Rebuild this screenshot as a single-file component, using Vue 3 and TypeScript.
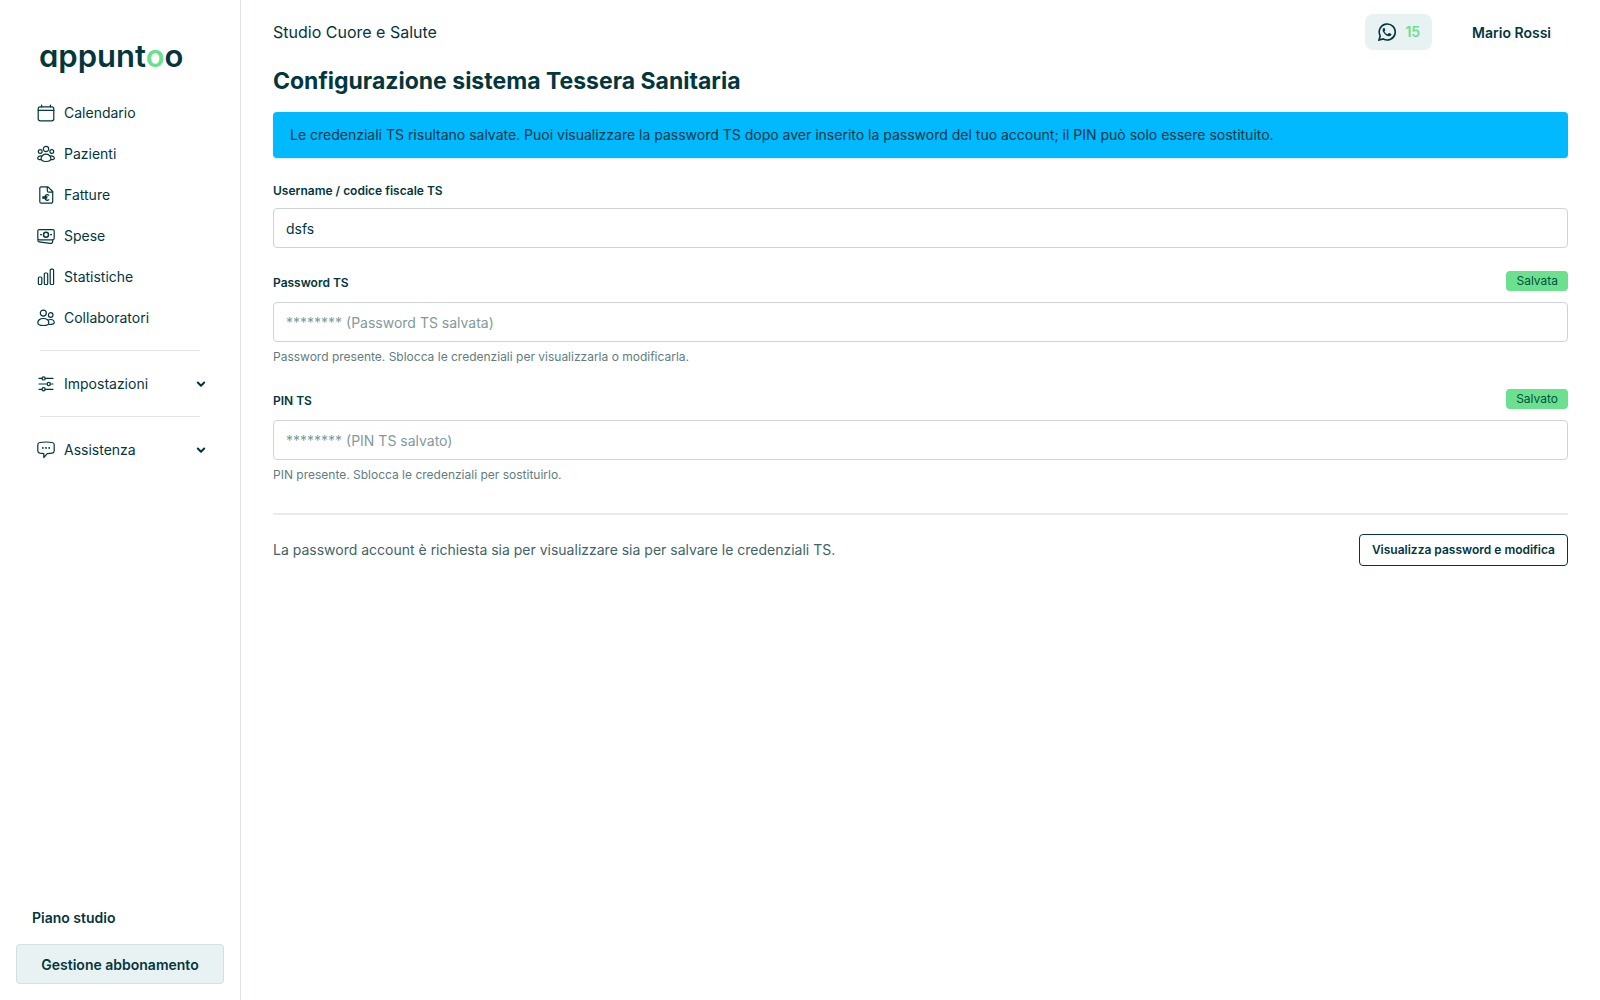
<script setup lang="ts">
import { ref } from 'vue'

interface NavItem {
  label: string
  icon: string
}

const icons: Record<string, string> = {
  calendar:
    '<rect x="1.2" y="2.8" width="15.6" height="14" rx="2"/><path d="M1.2 6.4h15.6M4.6 1v1.8M13.4 1v1.8"/>',
  patients:
    '<circle cx="9" cy="4" r="2.7"/><circle cx="3.2" cy="6.5" r="1.9"/><circle cx="14.8" cy="6.5" r="1.9"/><path d="M9 9.2c-2.7 0-4.9 2-4.9 4.4 0 1.800 1.900 2.900 4.900 2.900s4.900-1.100 4.900-2.900c0-2.400-2.200-4.400-4.900-4.400zM4.200 10.800C2 10.700.700 11.700.700 13.200c0 .9.900 1.500 3.200 1.500M13.800 10.800c2.200-.1 3.500.9 3.500 2.400 0 .9-.9 1.500-3.200 1.500"/>',
  invoice:
    '<path d="M4.300.8h6.700l4.700 4.700v10.200a1.500 1.500 0 0 1-1.500 1.500H4.300a1.500 1.500 0 0 1-1.500-1.500V2.300A1.500 1.500 0 0 1 4.300.8zM10.300 1v3.700a1.500 1.500 0 0 0 1.500 1.500h3.700"/><path d="M11.800 9.200a2.700 2.700 0 1 0 0 4.600M5.700 10.800h4.500M5.700 12.200h4"/>',
  expenses:
    '<rect x=".8" y="2.600" width="16.400" height="10.200" rx="1.500"/><circle cx="9" cy="7.700" r="2.500" stroke-width="1.500"/><path d="M3.500 7.700h.9M13.600 7.700h.9M.900 12.500v1.100c0 .7.500 1.100 1.200 1.200l10.900 1.500c1.500.2 2.700-.2 2.700-1.500v-1.800"/>',
  stats:
    '<rect x="1.400" y="9" width="3.400" height="7.500" rx="1"/><rect x="7.300" y="5" width="3.400" height="11.500" rx="1"/><rect x="13.200" y="1.200" width="3.400" height="15.300" rx="1"/>',
  team:
    '<circle cx="6.300" cy="4.100" r="3"/><circle cx="13.700" cy="6" r="2.300"/><path d="M6.300 9.500c-3.400 0-5.500 1.900-5.500 4.500 0 1.600 2 2.500 5.500 2.500s5.500-.9 5.500-2.500c0-2.600-2.100-4.500-5.500-4.500zM11 11.200c.7-.5 1.600-.7 2.700-.7 2.100 0 3.500 1.300 3.500 3 0 1.200-1.600 2-4.900 2"/>',
  sliders:
    '<path d="M2 3.400h3M8.200 3.400H16M2 9h8.200M13.400 9H16M2 14.300h3M8.200 14.300H16"/><circle cx="6.600" cy="3.400" r="1.600"/><circle cx="11.800" cy="9" r="1.600"/><circle cx="6.600" cy="14.300" r="1.600"/>',
  chat:
    '<path d="M2.800 1.500C6.500.9 11.500.9 15.200 1.500c1.200.2 2 1.100 2 2.300v6c0 1.300-.8 2.200-2 2.400-2 .3-3.600.4-5 .4L6.800 16.500v-3.900l-4-.4c-1.200-.2-2-1.100-2-2.400V3.800c0-1.200.8-2.100 2-2.300z"/><path d="M5.700 6.900h.2M8.900 6.900h.2M12.100 6.900h.2" stroke-width="1.700"/>',
}

const mainNav: NavItem[] = [
  { label: 'Calendario', icon: 'calendar' },
  { label: 'Pazienti', icon: 'patients' },
  { label: 'Fatture', icon: 'invoice' },
  { label: 'Spese', icon: 'expenses' },
  { label: 'Statistiche', icon: 'stats' },
  { label: 'Collaboratori', icon: 'team' },
]

const groups: NavItem[] = [
  { label: 'Impostazioni', icon: 'sliders' },
  { label: 'Assistenza', icon: 'chat' },
]

const username = ref('dsfs')
const password = ref('')
const pin = ref('')
</script>

<template>
  <div class="layout">
    <aside class="sidebar">
      <a class="logo" href="#">appunt<span class="logo-accent">o</span>o</a>
      <nav class="nav">
        <a v-for="item in mainNav" :key="item.label" class="nav-item" href="#">
          <svg class="icon" viewBox="0 0 18 18" aria-hidden="true" v-html="icons[item.icon]"></svg>
          <span>{{ item.label }}</span>
        </a>
        <template v-for="group in groups" :key="group.label">
          <hr class="nav-divider" />
          <button type="button" class="nav-item">
            <svg class="icon" viewBox="0 0 18 18" aria-hidden="true" v-html="icons[group.icon]"></svg>
            <span>{{ group.label }}</span>
            <svg class="chevron" viewBox="0 0 10 10" aria-hidden="true"><path d="M1.800 3.500 5 6.700l3.200-3.200" /></svg>
          </button>
        </template>
      </nav>
      <div class="plan">
        <p class="plan-title">Piano studio</p>
        <button type="button" class="plan-button">Gestione abbonamento</button>
      </div>
    </aside>

    <div class="main">
      <header class="topbar">
        <span class="studio">Studio Cuore e Salute</span>
        <div class="account">
          <button type="button" class="whatsapp">
            <svg class="icon-wa" viewBox="0 0 18 18" aria-hidden="true">
              <path class="wa-ring" d="M1 17l1.200-4.200A8 8 0 1 1 5.200 15.900z" />
              <path class="wa-phone" d="M6.400 4.700c-.3 0-.7.100-1 .5-.5.500-.8 1.100-.8 1.900 0 1.300.9 2.500 1.900 3.600 1.200 1.300 2.600 2.400 4.500 2.600 1 .1 2-.5 2.300-1.200.2-.5.200-1 0-1.100l-2-1c-.3-.1-.5 0-.7.200l-.7.900c-.2.200-.4.200-.6.100-1.200-.5-2.100-1.300-2.800-2.500-.1-.2 0-.4.100-.5l.6-.8c.1-.2.100-.4 0-.6l-.700-1.800c-.1-.200-.2-.300-.4-.300z" />
            </svg>
            <span>15</span>
          </button>
          <button type="button" class="user">Mario Rossi</button>
        </div>
      </header>

      <main>
        <h1>Configurazione sistema Tessera Sanitaria</h1>
        <div class="alert" role="status">
          Le credenziali TS risultano salvate. Puoi visualizzare la password TS dopo aver inserito la password del tuo account; il PIN può solo essere sostituito.
        </div>

        <form @submit.prevent>
          <div class="field">
            <label for="ts-username">Username / codice fiscale TS</label>
            <input id="ts-username" v-model="username" type="text" />
          </div>
          <div class="field">
            <div class="label-row">
              <label for="ts-password">Password TS</label>
              <span class="badge">Salvata</span>
            </div>
            <input id="ts-password" v-model="password" type="password" placeholder="******** (Password TS salvata)" />
            <p class="hint">Password presente. Sblocca le credenziali per visualizzarla o modificarla.</p>
          </div>
          <div class="field">
            <div class="label-row">
              <label for="ts-pin">PIN TS</label>
              <span class="badge">Salvato</span>
            </div>
            <input id="ts-pin" v-model="pin" type="password" placeholder="******** (PIN TS salvato)" />
            <p class="hint">PIN presente. Sblocca le credenziali per sostituirlo.</p>
          </div>
          <div class="actions">
            <p>La password account è richiesta sia per visualizzare sia per salvare le credenziali TS.</p>
            <button type="submit" class="outline">Visualizza password e modifica</button>
          </div>
        </form>
      </main>
    </div>
  </div>
</template>

<style>
body {
  margin: 0;
  background: #fff;
}
</style>

<style scoped>
.layout {
  display: flex;
  min-height: 100vh;
  font-family: Inter, "Liberation Sans", sans-serif;
  font-size: 14px;
  line-height: 20px;
  color: #03363d;
}
*,
*::before {
  box-sizing: border-box;
}
button,
input {
  font: inherit;
  color: inherit;
}
button {
  border: 0;
  background: none;
  cursor: pointer;
}
p {
  margin: 0;
}
.sidebar {
  display: flex;
  flex: 0 0 241px;
  flex-direction: column;
  padding: 32px 16px 16px;
  border-right: 1px solid #e0e6e7;
}
.logo {
  margin: 0 0 12px 23px;
  font-size: 31px;
  line-height: 48px;
  font-weight: 600;
  font-feature-settings: "cv11";
  color: #03363d;
  text-decoration: none;
}
.logo-accent {
  color: #6be08f;
}
.nav {
  display: flex;
  flex-direction: column;
}
.nav-item {
  display: flex;
  align-items: center;
  gap: 9px;
  height: 41px;
  padding: 0 18px 0 21px;
  color: #03363d;
  text-align: left;
  text-decoration: none;
}
.icon {
  width: 18px;
  height: 18px;
  fill: none;
  stroke: currentColor;
  stroke-width: 1.2;
  stroke-linecap: round;
  stroke-linejoin: round;
}
.chevron {
  width: 10px;
  height: 10px;
  margin-left: auto;
  fill: none;
  stroke: currentColor;
  stroke-width: 2;
  stroke-linecap: round;
  stroke-linejoin: round;
}
.nav-divider {
  width: 160px;
  height: 1px;
  margin: 12px 24px;
  border: 0;
  background: #e0e6e7;
}
.plan {
  margin-top: auto;
}
.plan-title {
  margin: 0 0 16px 16px;
  font-weight: 600;
}
.plan-button {
  width: 100%;
  height: 40px;
  padding: 2px 0 0;
  border: 1px solid #d5dfe0;
  border-radius: 4px;
  background: #e9f2f3;
  font-weight: 600;
}
.main {
  flex: 1;
  min-width: 0;
  padding: 0 32px;
}
.topbar {
  display: flex;
  align-items: center;
  justify-content: space-between;
  height: 64px;
}
.studio {
  font-size: 16px;
  line-height: 24px;
}
.account {
  display: flex;
  align-items: center;
  gap: 24px;
}
.whatsapp {
  display: flex;
  align-items: center;
  gap: 9px;
  height: 36px;
  padding: 0 12px 0 13px;
  border-radius: 8px;
  background: #e9f2f3;
  font-weight: 600;
  color: #6be08f;
}
.icon-wa {
  width: 18px;
  height: 18px;
  color: #03363d;
}
.wa-ring {
  fill: none;
  stroke: currentColor;
  stroke-width: 1.6;
}
.wa-phone {
  fill: currentColor;
}
.user {
  padding: 2px 17px 0 16px;
  font-weight: 600;
}
h1 {
  margin: 0 0 14px;
  font-size: 23px;
  line-height: 34px;
  font-weight: 700;
}
.alert {
  margin-bottom: 24px;
  padding: 13px 17px;
  border-radius: 4px;
  background: #00b9ff;
  box-shadow: 0 1px 2px rgba(3, 54, 61, 0.15);
}
.field {
  display: flex;
  flex-direction: column;
  margin-bottom: 23px;
}
label {
  margin-bottom: 8px;
  font-size: 12px;
  line-height: 18px;
  font-weight: 600;
}
.label-row {
  display: flex;
  align-items: flex-start;
  justify-content: space-between;
  height: 22px;
  margin-bottom: 9px;
}
.label-row label {
  margin: 0;
  line-height: 24px;
}
.badge {
  padding: 0 10px;
  border-radius: 4px;
  background: #6be08f;
  font-size: 12px;
  line-height: 20px;
  color: #03503f;
}
input {
  width: 100%;
  height: 40px;
  padding: 0 12px;
  border: 1px solid #cdd4d5;
  border-radius: 4px;
  background: #fff;
}
input::placeholder {
  color: #819a9d;
  opacity: 1;
}
.hint {
  margin-top: 6px;
  font-size: 12px;
  line-height: 18px;
  color: #5f7d80;
}
.actions {
  display: flex;
  align-items: center;
  justify-content: space-between;
  margin-top: 29px;
  padding-top: 19px;
  border-top: 2px solid #e6ebeb;
  color: #426467;
}
.outline {
  height: 32px;
  padding: 0 12px;
  border: 1px solid #03363d;
  border-radius: 4px;
  background: #fff;
  font-size: 12px;
  font-weight: 600;
  color: #03363d;
}
</style>
